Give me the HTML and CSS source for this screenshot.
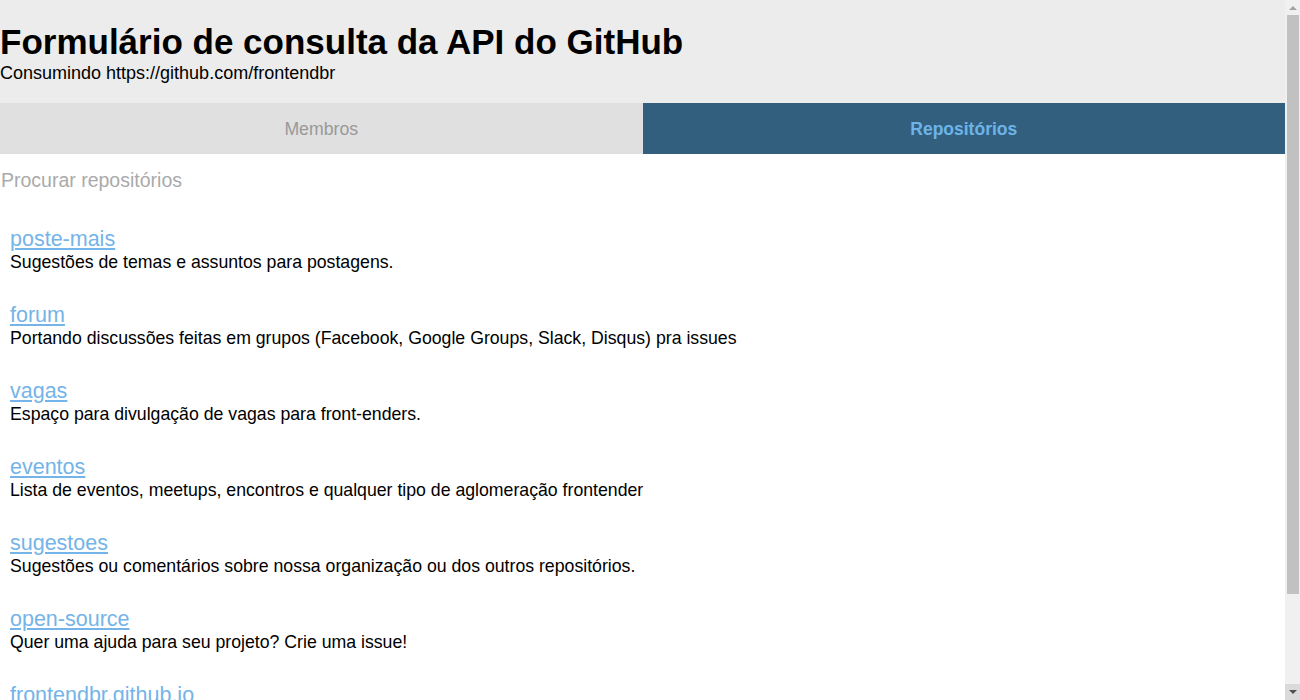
FILE: index.html
```html
<!DOCTYPE html>
<html lang="pt-BR">
<head>
<meta charset="utf-8">
<title>Formulário de consulta da API do GitHub</title>
<link rel="stylesheet" href="styles.css">
</head>
<body>
<div class="page">
  <header class="header">
    <h1 class="title">Formulário de consulta da API do GitHub</h1>
    <p class="subtitle">Consumindo https://github.com/frontendbr</p>
  </header>
  <nav class="tabs">
    <a class="tab" href="#">Membros</a>
    <a class="tab tab-active" href="#">Repositórios</a>
  </nav>
  <main class="content">
    <input class="search" type="text" placeholder="Procurar repositórios">
    <ul class="repos">
      <li class="repo"><div class="repo-title"><a class="repo-name" href="#">poste-mais</a></div><p class="repo-desc">Sugestões de temas e assuntos para postagens.</p></li>
      <li class="repo"><div class="repo-title"><a class="repo-name" href="#">forum</a></div><p class="repo-desc">Portando discussões feitas em grupos (Facebook, Google Groups, Slack, Disqus) pra issues</p></li>
      <li class="repo"><div class="repo-title"><a class="repo-name" href="#">vagas</a></div><p class="repo-desc">Espaço para divulgação de vagas para front-enders.</p></li>
      <li class="repo"><div class="repo-title"><a class="repo-name" href="#">eventos</a></div><p class="repo-desc">Lista de eventos, meetups, encontros e qualquer tipo de aglomeração frontender</p></li>
      <li class="repo"><div class="repo-title"><a class="repo-name" href="#">sugestoes</a></div><p class="repo-desc">Sugestões ou comentários sobre nossa organização ou dos outros repositórios.</p></li>
      <li class="repo"><div class="repo-title"><a class="repo-name" href="#">open-source</a></div><p class="repo-desc">Quer uma ajuda para seu projeto? Crie uma issue!</p></li>
      <li class="repo"><div class="repo-title"><a class="repo-name" href="#">frontendbr.github.io</a></div><p class="repo-desc">Site da comunidade Front-End Brasil.</p></li>
    </ul>
  </main>
</div>
<div class="scrollbar" aria-hidden="true">
  <div class="sb-btn sb-up"><span class="sb-arrow-up"></span></div>
  <div class="sb-thumb"></div>
  <div class="sb-track"></div>
  <div class="sb-btn sb-down"><span class="sb-arrow-down"></span></div>
</div>
</body>
</html>
```
FILE: styles.css
```css
html, body {
  margin: 0;
  padding: 0;
}
body {
  display: flex;
  height: 100vh;
  overflow: hidden;
  font-family: "Liberation Sans", Arial, sans-serif;
  color: #000;
  background: #fff;
}
.page {
  flex: 1;
  min-width: 0;
  overflow: hidden;
}
.header {
  background: #ececec;
  padding: 22px 0 19px;
}
.title {
  margin: 0;
  font-size: 35px;
  line-height: 40px;
  font-weight: bold;
}
.subtitle {
  margin: 0;
  font-size: 18px;
  line-height: 22px;
}
.tabs {
  display: flex;
  height: 51px;
}
.tab {
  flex: 1;
  display: flex;
  align-items: center;
  justify-content: center;
  padding-top: 2px;
  text-decoration: none;
  font-size: 17.7px;
  background: #e0e0e0;
  color: #999;
}
.tab-active {
  background: #335f7f;
  color: #6cb4e8;
  font-weight: bold;
  font-size: 17.5px;
}
.search {
  display: block;
  width: 100%;
  box-sizing: border-box;
  border: none;
  outline: none;
  margin: 0;
  padding: 14px 0 0 1px;
  height: 38px;
  font-family: "Liberation Sans", Arial, sans-serif;
  font-size: 19.5px;
  line-height: 24px;
  background: transparent;
}
.search::placeholder {
  color: #aaa;
}
.repos {
  list-style: none;
  margin: 0;
  padding: 36px 0 0 10px;
}
.repo {
  margin: 0 0 31px;
}
.repo-title {
  font-size: 21.5px;
  line-height: 23px;
}
.repo-name {
  color: #74b4e8;
  text-decoration: underline;
}
.repo-desc {
  margin: 0;
  font-size: 17.7px;
  line-height: 22px;
}
.scrollbar {
  flex: none;
  width: 15px;
  height: 100vh;
  background: #f0f0f0;
  display: flex;
  flex-direction: column;
}
.sb-btn {
  height: 15px;
  flex: none;
  display: flex;
  align-items: center;
  justify-content: center;
}
.sb-down {
  height: 16px;
  background: #dadada;
}
.sb-thumb {
  flex: none;
  height: 579px;
  margin: 0 1px 0 2px;
  background: #c1c1c1;
}
.sb-track {
  flex: 1;
}
.sb-arrow-up {
  width: 0;
  height: 0;
  border-left: 4px solid transparent;
  border-right: 4px solid transparent;
  border-bottom: 4px solid #a3a3a3;
}
.sb-arrow-down {
  width: 0;
  height: 0;
  border-left: 4px solid transparent;
  border-right: 4px solid transparent;
  border-top: 4px solid #505050;
}
```
